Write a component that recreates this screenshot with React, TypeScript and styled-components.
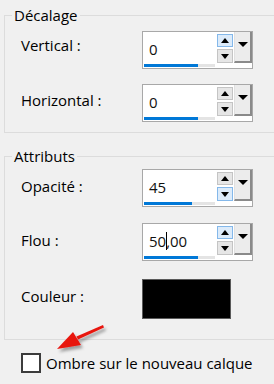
import styled, { createGlobalStyle } from 'styled-components';

const GlobalStyle = createGlobalStyle`
  html, body {
    margin: 0;
    padding: 0;
    background: #f0f0f0;
  }
  body {
    font-family: 'Open Sans', 'Noto Sans', sans-serif;
    overflow: hidden;
  }
`;

const Page = styled.div`
  position: relative;
  width: 274px;
  height: 384px;
  box-sizing: border-box;
  padding-top: 5px;
  overflow: hidden;
  background: #f0f0f0;
  color: #000;
  font-size: 15px;
  line-height: 20px;
`;

const Group = styled.fieldset<{ $gap?: number }>`
  margin: ${(p) => p.$gap ?? 0}px -30px 0 4px;
  padding: 0;
  min-width: 0;
  border: 1px solid #dcdcdc;
`;

const Legend = styled.legend`
  margin-left: 7px;
  padding: 0 2px;
  line-height: 20px;
`;

const Rows = styled.div<{ $top: number; $bottom: number }>`
  display: flex;
  flex-direction: column;
  padding: ${(p) => p.$top}px 0 ${(p) => p.$bottom}px 16px;
`;

const Row = styled.div<{ $gap?: number }>`
  display: flex;
  align-items: flex-start;
  margin-top: ${(p) => p.$gap ?? 0}px;
`;

const Label = styled.div<{ $pad: number }>`
  width: 121px;
  padding-top: ${(p) => p.$pad}px;
`;

const SpinBox = styled.div`
  display: flex;
  width: 111px;
  height: 38px;
  box-sizing: border-box;
  border: 1px solid #a8a8a8;
  background: #fff;
`;

const Edit = styled.div`
  display: flex;
  flex-direction: column;
  justify-content: space-between;
  width: 73px;
  padding: 7px 0 1px 1px;
  box-sizing: border-box;
`;

const Value = styled.div`
  display: flex;
  align-items: center;
  padding-left: 5px;
  color: #111;
`;

const Caret = styled.span`
  display: inline-block;
  width: 1px;
  height: 18px;
  margin: 0 -1px 0 0;
  background: #000;
`;

const Track = styled.div`
  height: 3px;
  width: 71px;
  background: #e4e4e4;
`;

const Fill = styled.div`
  height: 100%;
  background: #0078d7;
`;

const Arrows = styled.div`
  display: flex;
  flex-direction: column;
  gap: 2px;
  padding: 2px 1px 0 1px;
`;

const ArrowButton = styled.div<{ $hot?: boolean; $tall?: boolean }>`
  display: flex;
  align-items: center;
  justify-content: center;
  width: 16px;
  height: ${(p) => (p.$tall ? 14 : 13)}px;
  box-sizing: border-box;
  border: 1px solid ${(p) => (p.$hot ? '#84b8ea' : '#c4c4c4')};
  background: ${(p) => (p.$hot ? '#dcebfa' : '#e6e6e6')};
`;

const Drop = styled.div`
  display: flex;
  justify-content: center;
  padding-top: 10px;
  width: 18px;
  height: 31px;
  box-sizing: border-box;
  border-left: 1px solid #e0e0e0;
  border-right: 2px solid #8a8a8a;
  border-bottom: 2px solid #8a8a8a;
  background: #ececec;
`;

const Swatch = styled.div`
  width: 89px;
  height: 40px;
  box-sizing: border-box;
  border: 1px solid #5a5a5a;
  background: #000;
`;

const CheckRow = styled.label`
  display: flex;
  align-items: center;
  gap: 5px;
  margin: 13px 0 0 21px;
`;

const Box = styled.span`
  width: 20px;
  height: 20px;
  box-sizing: border-box;
  border: 2px solid #3c3c3c;
  background: #fff;
`;

const Pointer = styled.svg`
  position: absolute;
  left: 50px;
  top: 316px;
  overflow: visible;
`;

const Tri = ({ up, w = 9 }: { up?: boolean; w?: number }) => (
  <svg width={w} height={5} viewBox={`0 0 ${w} 5`}>
    <polygon points={up ? `0,5 ${w},5 ${w / 2},0` : `0,0 ${w},0 ${w / 2},5`} fill="#000" />
  </svg>
);

type SpinProps = {
  value: string;
  bar: number;
  hot?: 'up' | 'down';
  caret?: boolean;
};

const Spin = ({ value, bar, hot, caret }: SpinProps) => (
  <SpinBox>
    <Edit>
      <Value>
        {caret ? (
          <>
            {value.slice(0, 2)}
            <Caret />
            {value.slice(2)}
          </>
        ) : (
          value
        )}
      </Value>
      <Track>
        <Fill style={{ width: bar }} />
      </Track>
    </Edit>
    <Arrows>
      <ArrowButton $hot={hot === 'up'}>
        <Tri up w={8} />
      </ArrowButton>
      <ArrowButton $hot={hot === 'down'} $tall>
        <Tri w={8} />
      </ArrowButton>
    </Arrows>
    <Drop>
      <Tri w={10} />
    </Drop>
  </SpinBox>
);

export default function App() {
  return (
    <Page>
      <GlobalStyle />
      <Group>
        <Legend>Décalage</Legend>
        <Rows $top={6} $bottom={10}>
          <Row>
            <Label $pad={4}>Vertical :</Label>
            <Spin value="0" bar={54} hot="up" />
          </Row>
          <Row $gap={15}>
            <Label $pad={6}>Horizontal :</Label>
            <Spin value="0" bar={54} />
          </Row>
        </Rows>
      </Group>
      <Group $gap={13}>
        <Legend>Attributs</Legend>
        <Rows $top={3} $bottom={20}>
          <Row>
            <Label $pad={7}>Opacité :</Label>
            <Spin value="45" bar={48} hot="down" />
          </Row>
          <Row $gap={16}>
            <Label $pad={7}>Flou :</Label>
            <Spin value="50,00" bar={54} hot="up" caret />
          </Row>
          <Row $gap={18}>
            <Label $pad={7}>Couleur :</Label>
            <Swatch />
          </Row>
        </Rows>
      </Group>
      <CheckRow>
        <Box />
        Ombre sur le nouveau calque
      </CheckRow>
      <Pointer width="60" height="40" viewBox="0 0 60 40">
        <defs>
          <filter id="shade" x="-30%" y="-30%" width="160%" height="160%">
            <feDropShadow dx="2" dy="3" stdDeviation="1.6" floodColor="#000" floodOpacity="0.35" />
          </filter>
        </defs>
        <g filter="url(#shade)" fill="#e8140f">
          <polygon points="53,9 54,11.5 28,23.5 26.5,20.5" />
          <polygon points="7,33 23,16 31,29" />
        </g>
      </Pointer>
    </Page>
  );
}
